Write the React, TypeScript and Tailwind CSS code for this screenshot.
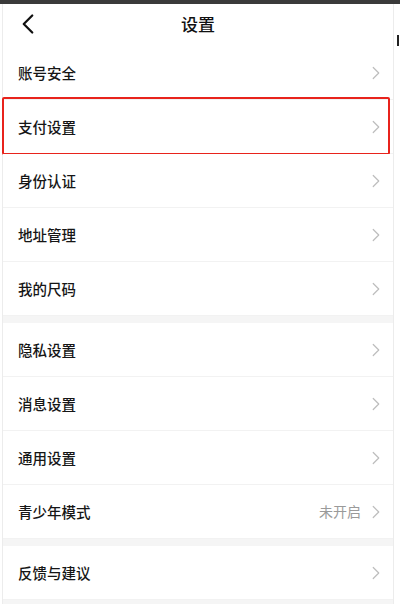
import { ChevronLeft, ChevronRight } from "lucide-react";
import React from "react";

const groups: { label: string; value?: string }[][] = [
    [
        { label: "账号安全" },
        { label: "支付设置" },
        { label: "身份认证" },
        { label: "地址管理" },
        { label: "我的尺码" },
    ],
    [
        { label: "隐私设置" },
        { label: "消息设置" },
        { label: "通用设置" },
        { label: "青少年模式", value: "未开启" },
    ],
    [{ label: "反馈与建议" }],
];

function Row({ label, value, highlight }: { label: string; value?: string; highlight?: boolean }) {
    return (
        <div className="relative h-[54px] flex items-center justify-between pl-[15px] pr-[6px] bg-white border-b border-[#f2f2f2]">
            <span className="text-[14.5px] font-medium text-[#161616]">{label}</span>
            <div className="flex items-center gap-[4px]">
                {value && <span className="text-[14px] text-[#9a9a9a]">{value}</span>}
                <ChevronRight size={22} strokeWidth={1.3} className="text-[#bdbdbd]" />
            </div>
            {highlight && (
                <div className="absolute -left-[1px] right-[3px] -top-[3px] bottom-[-2px] border-2 border-[#e8231c] rounded-[2px]" />
            )}
        </div>
    );
}

export default function App() {
    return (
        <div
            className="w-[400px] h-[604px] overflow-hidden bg-white flex flex-col"
            style={{ fontFamily: '"Noto Sans CJK SC", "Noto Sans", sans-serif' }}
        >
            <div className="h-[4px] bg-[#3a3a3a] shrink-0" />
            <div className="flex flex-1">
                <div className="w-[2px] bg-white" />
                <div className="flex-1 flex flex-col border-l border-r border-[#ececec] bg-[#f5f5f5]">
                    <div className="h-[42px] bg-white flex items-center relative">
                        <ChevronLeft size={34} strokeWidth={1.6} className="absolute left-[8px] top-[3px] text-[#111]" />
                        <h1 className="flex-1 text-center text-[17px] font-medium text-[#111] -mt-[3px]">设置</h1>
                    </div>
                    {groups.map((g, gi) => (
                        <div key={gi} className={gi > 0 ? "mt-[7px]" : ""}>
                            {g.map((r) => (
                                <Row key={r.label} label={r.label} value={r.value} highlight={r.label === "支付设置"} />
                            ))}
                        </div>
                    ))}
                </div>
                <div className="w-[6px] bg-white relative">
                    <div className="absolute left-[3px] top-[31px] w-[2px] h-[11px] bg-[#222]" />
                </div>
            </div>
        </div>
    );
}
